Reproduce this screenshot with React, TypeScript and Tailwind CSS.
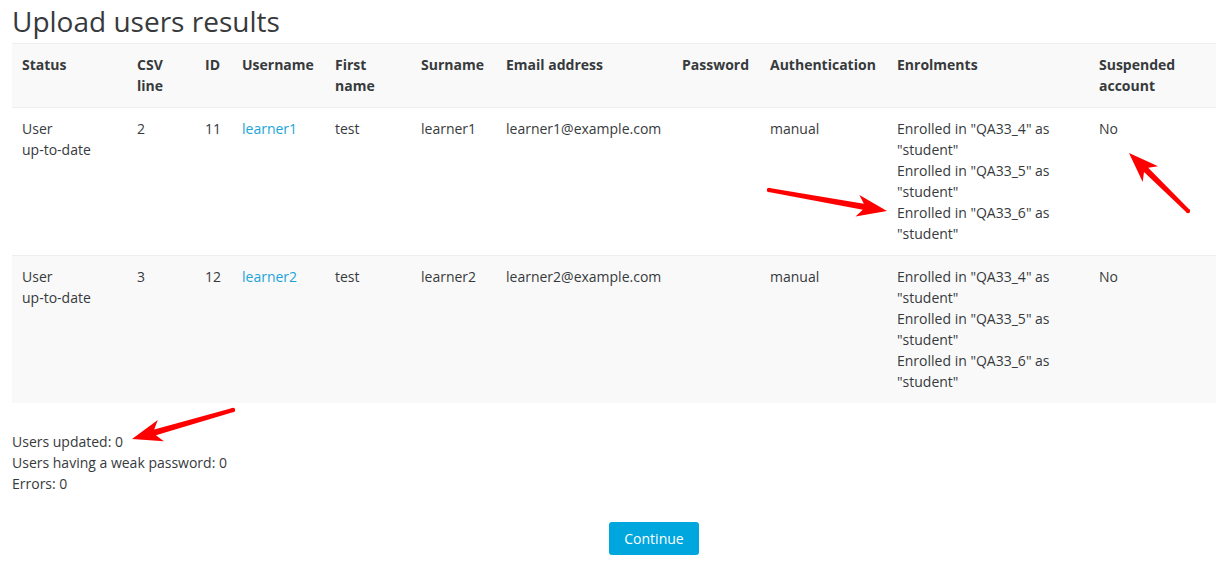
import React from "react";

const cols = [115, 68, 37, 93, 86, 85, 176, 88, 127, 202, 207];

const headers: React.ReactNode[] = [
  "Status",
  <>CSV<br />line</>,
  "ID",
  "Username",
  <>First<br />name</>,
  "Surname",
  "Email address",
  "Password",
  "Authentication",
  "Enrolments",
  <>Suspended<br />account</>,
];

type Row = { csv: string; id: string; user: string; bg: string };
const rows: Row[] = [
  { csv: "2", id: "11", user: "learner1", bg: "bg-white" },
  { csv: "3", id: "12", user: "learner2", bg: "bg-[#f9f9f9]" },
];

function Arrow({ x1, y1, x2, y2 }: { x1: number; y1: number; x2: number; y2: number }) {
  const dx = x2 - x1;
  const dy = y2 - y1;
  const len = Math.sqrt(dx * dx + dy * dy);
  const ux = dx / len;
  const uy = dy / len;
  const px = -uy;
  const py = ux;
  const headL = 30;
  const headW = 11;
  const bx = x2 - ux * headL;
  const by = y2 - uy * headL;
  const nx = x2 - ux * (headL - 6);
  const ny = y2 - uy * (headL - 6);
  const tail = 2;
  const neck = 3;
  const pts = [
    [x1 + px * tail, y1 + py * tail],
    [nx + px * neck, ny + py * neck],
    [bx + px * headW, by + py * headW],
    [x2, y2],
    [bx - px * headW, by - py * headW],
    [nx - px * neck, ny - py * neck],
    [x1 - px * tail, y1 - py * tail],
  ]
    .map((p) => p[0].toFixed(1) + "," + p[1].toFixed(1))
    .join(" ");
  return (
    <g>
      <polygon points={pts} fill="#ff0000" />
      <circle cx={x1} cy={y1} r={2.2} fill="#ff0000" />
    </g>
  );
}

export default function App() {
  return (
    <div
      className="relative w-[1216px] h-[572px] overflow-hidden bg-white text-[#373a3c]"
      style={{ fontFamily: '"Open Sans", sans-serif' }}
    >
      <div className="w-[1296px] pl-[12px]">
        <h1 className="text-[28px] leading-[1.2] font-normal mt-[5px] mb-[4px] text-[#373a3c]">
          Upload users results
        </h1>
        <table className="w-full table-fixed border-collapse text-[14px] leading-[21px]">
          <colgroup>
            {cols.map((w, i) => (
              <col key={i} style={{ width: w }} />
            ))}
          </colgroup>
          <thead>
            <tr className="bg-[#f9f9f9] border-t border-[#eeeeee]">
              {headers.map((h, i) => (
                <th
                  key={i}
                  className="text-left align-top font-bold px-[10px] pt-[10px] pb-[11px]"
                >
                  {h}
                </th>
              ))}
            </tr>
          </thead>
          <tbody>
            {rows.map((r) => (
              <tr key={r.id} className={`${r.bg} border-t border-[#eeeeee]`}>
                <td className="align-top px-[10px] pt-[10px] pb-[11px]">
                  User
                  <br />
                  up-to-date
                </td>
                <td className="align-top px-[10px] pt-[10px] pb-[11px]">{r.csv}</td>
                <td className="align-top px-[10px] pt-[10px] pb-[11px]">{r.id}</td>
                <td className="align-top px-[10px] pt-[10px] pb-[11px]">
                  <a className="text-[#1ba4d8]">{r.user}</a>
                </td>
                <td className="align-top px-[10px] pt-[10px] pb-[11px]">test</td>
                <td className="align-top px-[10px] pt-[10px] pb-[11px]">{r.user}</td>
                <td className="align-top px-[10px] pt-[10px] pb-[11px]">{r.user}@example.com</td>
                <td className="align-top px-[10px] pt-[10px] pb-[11px]"></td>
                <td className="align-top px-[10px] pt-[10px] pb-[11px]">manual</td>
                <td className="align-top px-[10px] pt-[10px] pb-[11px]">
                  {["4", "5", "6"].map((n) => (
                    <div key={n}>
                      Enrolled in "QA33_{n}" as
                      <br />
                      "student"
                    </div>
                  ))}
                </td>
                <td className="align-top px-[10px] pt-[10px] pb-[11px]">No</td>
              </tr>
            ))}
          </tbody>
        </table>
        <div className="mt-[28px] text-[14px] leading-[21px]">
          <div>Users updated: 0</div>
          <div>Users having a weak password: 0</div>
          <div>Errors: 0</div>
        </div>
        <div className="flex justify-center mt-[28px]">
          <button className="bg-[#00a7de] text-white text-[14px] leading-[21px] px-[15px] py-[6px] rounded-[3px]">
            Continue
          </button>
        </div>
      </div>
      <svg className="absolute left-0 top-0 pointer-events-none" width="1216" height="572">
        <Arrow x1={769} y1={190} x2={887} y2={211} />
        <Arrow x1={1188} y1={211} x2={1129} y2={153} />
        <Arrow x1={233} y1={410} x2={132} y2={439} />
      </svg>
    </div>
  );
}
